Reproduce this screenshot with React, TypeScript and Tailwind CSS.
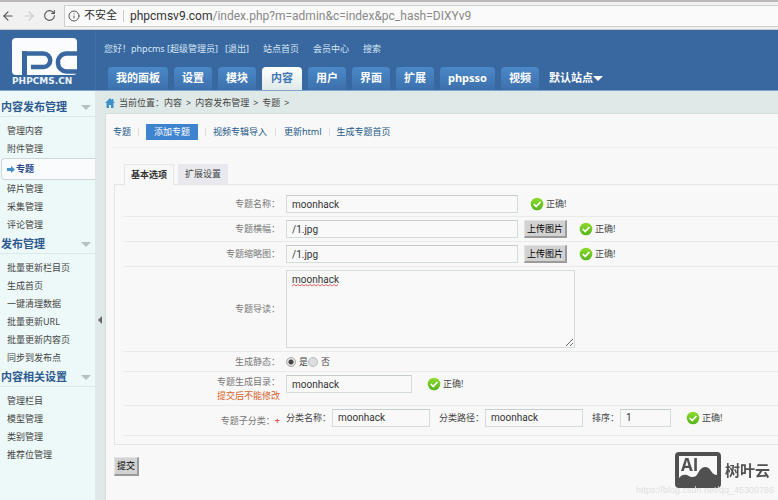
import React from 'react';
import { ArrowLeft, ArrowRight, Info, RotateCw } from 'lucide-react';

interface MenuItem {
  label: string;
  active?: boolean;
}

interface MenuGroup {
  title: string;
  items: MenuItem[];
}

const topTabs: MenuItem[] = [
  { label: '我的面板' },
  { label: '设置' },
  { label: '模块' },
  { label: '内容', active: true },
  { label: '用户' },
  { label: '界面' },
  { label: '扩展' },
  { label: 'phpsso' },
  { label: '视频' }
];

const menuGroups: MenuGroup[] = [
  {
    title: '内容发布管理',
    items: [
      { label: '管理内容' },
      { label: '附件管理' },
      { label: '专题', active: true },
      { label: '碎片管理' },
      { label: '采集管理' },
      { label: '评论管理' }
    ]
  },
  {
    title: '发布管理',
    items: [
      { label: '批量更新栏目页' },
      { label: '生成首页' },
      { label: '一键清理数据' },
      { label: '批量更新URL' },
      { label: '批量更新内容页' },
      { label: '同步到发布点' }
    ]
  },
  {
    title: '内容相关设置',
    items: [
      { label: '管理栏目' },
      { label: '模型管理' },
      { label: '类别管理' },
      { label: '推荐位管理' }
    ]
  }
];

const inputClass =
  'h-[18px] border border-[#d3dbdd] border-t-[#c6cdd0] bg-[#f9f9f9] px-[5px] font-["Roboto",sans-serif] text-[10px] text-[#333] outline-none';

const Logo: React.FC = () => (
  <a href="#" className="flex w-[95px] shrink-0 flex-col gap-[2px] pl-3 pt-2 leading-none">
    <svg width="65" height="37" viewBox="0 0 65 37" aria-hidden="true">
      <rect width="65" height="37" rx="4" fill="#fafcfd" />
      <path d="M12.500 37V20" fill="none" stroke="#38689f" strokeWidth="5" />
      <path d="M10 15.500H31.500a6.500 6.500 0 0 1 0 13.500H19" fill="none" stroke="#38689f" strokeWidth="4.500" />
      <path d="M12.500 13.300V24" fill="none" stroke="#38689f" strokeWidth="5" />
      <path d="M65 15.500H54.500a8.500 8.500 0 0 0-8.500 8.500v1.500a8.500 8.500 0 0 0 8.500 8H65" fill="none" stroke="#38689f" strokeWidth="4.500" />
    </svg>
    <span className="font-['DejaVu_Sans',sans-serif] text-[9px] font-bold text-[#e8f1fa]">PHPCMS.CN</span>
  </a>
);

const Caret: React.FC<{ className: string }> = ({ className }) => (
  <svg className={className} width="10" height="5" viewBox="0 0 10 5" fill="currentColor" aria-hidden="true">
    <path d="M0 0h10L5 5z" />
  </svg>
);

const Correct: React.FC = () => (
  <span className="flex items-center gap-[2px] text-[#444]">
    <svg width="14" height="14" viewBox="0 0 14 14" aria-hidden="true">
      <defs>
        <linearGradient id="ok" x1="0" y1="0" x2="0" y2="1">
          <stop offset="0" stopColor="#8fdc2c" />
          <stop offset="1" stopColor="#55b51c" />
        </linearGradient>
      </defs>
      <circle cx="7" cy="7" r="6.300" fill="url(#ok)" />
      <path d="M3.800 7l2.400 2.500 4.200-4.500" fill="none" stroke="#fff" strokeWidth="1.800" />
    </svg>
    正确!
  </span>
);

interface FieldRowProps {
  label: React.ReactNode;
  htmlFor?: string;
  className?: string;
  children: React.ReactNode;
}

const FieldRow: React.FC<FieldRowProps> = ({ label, htmlFor, className = '', children }) => (
  <div className={`ml-2 flex items-center gap-[6px] border-b border-[#eaeaec] ${className}`}>
    <label htmlFor={htmlFor} className="w-[157px] shrink-0 text-right text-[#777]">
      {label}
    </label>
    {children}
  </div>
);

const UploadButton: React.FC = () => (
  <button className="h-[18px] shrink-0 border border-b-2 border-r-2 border-[#e2e2e2] border-b-[#9b9b9b] border-r-[#9b9b9b] bg-[#d2d2d2] px-[2px] text-[9px] leading-3 text-black">
    上传图片
  </button>
);

const BrowserBar: React.FC = () => (
  <div className="border-t-2 border-[#bdb9ba]">
    <div className="flex h-7 items-center border-b border-[#c9cdd2] bg-[#f1f1f1] text-[#555]">
      <div className="flex w-16 shrink-0 items-center gap-[7px] pl-px">
        <ArrowLeft size={14} />
        <ArrowRight size={14} className="text-[#ccc]" />
        <RotateCw size={13} />
      </div>
      <div className="flex h-[22px] grow items-center border border-r-0 border-[#cfcfcf] bg-[#fafafa] pl-[3px] text-[11px]">
        <Info size={12} />
        <span className="pl-1 text-[#333]">不安全</span>
        <span className="mx-[6px] h-3 w-px bg-[#ccc]" />
        <span className="font-['Roboto',sans-serif] text-[12px] text-[#888]">
          <span className="text-[#333]">phpcmsv9.com</span>/index.php?m=admin&amp;c=index&amp;pc_hash=DIXYv9
        </span>
      </div>
    </div>
  </div>
);

const Header: React.FC = () => (
  <header className="flex h-[61px] border-b border-[#7fa3cb] bg-[#38689f]">
    <Logo />
    <div className="flex grow flex-col justify-between border-l border-[#426fa6] pl-2 text-white">
      <div className="flex gap-[14px] pt-3 text-[9px] leading-[14px] text-[#d5e6f6]">
        <span>
          您好！phpcms [超级管理员] &nbsp;&nbsp;<a href="#">[退出]</a>
        </span>
        <a href="#">站点首页</a>
        <a href="#">会员中心</a>
        <a href="#">搜索</a>
      </div>
      <nav className="flex gap-[6px] pl-1 text-[11px] font-bold">
        {topTabs.map((tab) => (
          <a
            key={tab.label}
            href="#"
            className={`flex h-[23px] items-center rounded-t-sm ${
              tab.active
                ? 'bg-linear-to-b from-white to-[#dfeae8] px-[9px] text-[#3f76b5]'
                : 'bg-linear-to-b from-[#4b88c8] to-[#3c70ac] px-2'
            }`}
          >
            {tab.label}
          </a>
        ))}
        <button className="flex h-[22px] items-center pl-1 font-bold">
          默认站点
          <Caret className="text-white" />
        </button>
      </nav>
    </div>
  </header>
);

const Sidebar: React.FC = () => (
  <aside className="w-[95px] shrink-0 bg-[#edf8f8] pt-[7px]">
    {menuGroups.map((group) => (
      <section key={group.title}>
        <h2 className="flex h-[19px] items-center justify-between border-b border-[#dbe8ea] pl-px pr-1 text-[11px] font-bold text-[#2d5a91]">
          {group.title}
          <Caret className="text-[#b7bfc0]" />
        </h2>
        <ul className="pb-px pt-[5px]">
          {group.items.map((item) =>
            item.active ? (
              <li key={item.label} className="ml-px flex h-[22px] items-center rounded-l border border-r-0 border-[#cdd7da] bg-[#f9fbfc]">
                <svg className="ml-[5px]" width="8" height="7" viewBox="0 0 8 7" fill="#4193c9" aria-hidden="true">
                  <path d="M0 2h4V0l4 3.500L4 7V5H0z" />
                </svg>
                <a href="#" className="pl-px font-bold text-[#23458c]">
                  {item.label}
                </a>
              </li>
            ) : (
              <li key={item.label} className="flex h-[18px] items-center pl-[7px]">
                <a href="#">{item.label}</a>
              </li>
            )
          )}
        </ul>
      </section>
    ))}
  </aside>
);

const TopicForm: React.FC = () => (
  <form className="pl-2 pt-4" onSubmit={(e) => e.preventDefault()}>
    <div className="flex gap-1 pl-[10px]">
      <button className="-mb-px h-[21px] border border-b-0 border-[#e6e6ea] bg-[#f8f8f8] px-[6px] font-bold text-[#333]">
        基本选项
      </button>
      <button className="h-5 bg-[#e8e8ee] px-[7px] text-[#444]">扩展设置</button>
    </div>

    <div className="border border-r-0 border-[#e2e4e6] pb-2 pt-[7px]">
      <FieldRow label="专题名称：" htmlFor="title" className="h-[25px]">
        <input id="title" defaultValue="moonhack" className={`${inputClass} w-[232px]`} />
        <div className="pl-[6px]">
          <Correct />
        </div>
      </FieldRow>
      <FieldRow label="专题横幅：" htmlFor="banner" className="h-[25px]">
        <input id="banner" defaultValue="/1.jpg" className={`${inputClass} w-[232px]`} />
        <UploadButton />
        <div className="pl-[6px]">
          <Correct />
        </div>
      </FieldRow>
      <FieldRow label="专题缩略图：" htmlFor="thumb" className="h-[25px]">
        <input id="thumb" defaultValue="/1.jpg" className={`${inputClass} w-[232px]`} />
        <UploadButton />
        <div className="pl-[6px]">
          <Correct />
        </div>
      </FieldRow>
      <FieldRow label="专题导读：" htmlFor="description" className="h-[85px]">
        <div className="relative h-[78px] w-[289px]">
          <textarea
            id="description"
            defaultValue="moonhack"
            className="block h-full w-full resize border border-[#d3dbdd] bg-[#f9f9f9] px-[5px] py-[2px] font-['Roboto',sans-serif] text-[10px] leading-[14px] text-[#333] outline-none"
          />
          {/* Spell check underline */}
          <svg className="pointer-events-none absolute left-[6px] top-[14px]" width="47" height="3" aria-hidden="true">
            <path
              d="M0 2l2-1.500 2 1.500 2-1.500 2 1.500 2-1.500 2 1.500 2-1.500 2 1.500 2-1.500 2 1.500 2-1.500 2 1.500 2-1.500 2 1.500 2-1.500 2 1.500 2-1.500 2 1.500 2-1.500 2 1.500 2-1.500 2 1.500 2-1.500"
              fill="none"
              stroke="#e06a6a"
            />
          </svg>
        </div>
      </FieldRow>
      <FieldRow label="生成静态：" className="h-5">
        <div className="flex items-center text-[#444]">
          <input
            id="static-yes"
            type="radio"
            name="static"
            defaultChecked
            className="size-[10px] appearance-none rounded-full border border-[#aaa] bg-[#e3e3e3] bg-[radial-gradient(#444_0_2px,transparent_3px)]"
          />
          <label htmlFor="static-yes" className="pl-[3px]">是</label>
          <input
            id="static-no"
            type="radio"
            name="static"
            className="size-[10px] appearance-none rounded-full border border-[#bbb] bg-[#dedede]"
          />
          <label htmlFor="static-no" className="pl-[3px]">否</label>
        </div>
      </FieldRow>
      <div className="ml-2 flex h-[34px] gap-[6px] border-b border-[#eaeaec] pt-[3px]">
        <label htmlFor="directory" className="w-[157px] shrink-0 text-right leading-[14px] text-[#777]">
          专题生成目录：
          <br />
          <span className="text-[#d9622b]">提交后不能修改</span>
        </label>
        <input id="directory" defaultValue="moonhack" className={`${inputClass} w-[126px]`} />
        <div className="pl-[9px] pt-[2px]">
          <Correct />
        </div>
      </div>
      <FieldRow
        label={
          <>
            专题子分类：<span className="font-bold text-[#e0524a]">+</span>
          </>
        }
        htmlFor="type-name"
        className="h-[30px]"
      >
        <div className="flex h-full items-start gap-[9px] pt-[3px] leading-[18px] text-[#444]">
          <div className="flex gap-px">
            <label htmlFor="type-name">分类名称：</label>
            <input id="type-name" defaultValue="moonhack" className={`${inputClass} w-[98px]`} />
          </div>
          <div className="flex gap-px">
            <label htmlFor="type-path">分类路径：</label>
            <input id="type-path" defaultValue="moonhack" className={`${inputClass} w-[98px]`} />
          </div>
          <div className="flex gap-px">
            <label htmlFor="type-order">排序：</label>
            <input id="type-order" defaultValue="1" className={`${inputClass} w-[51px]`} />
          </div>
          <div className="pl-[6px]">
            <Correct />
          </div>
        </div>
      </FieldRow>
    </div>

    <button className="mt-3 h-[19px] border border-b-2 border-r-2 border-[#e2e2e2] border-b-[#9b9b9b] border-r-[#9b9b9b] bg-[#d2d2d2] px-[2px] text-black">
      提交
    </button>
  </form>
);

const Watermark: React.FC = () => (
  <div className="pointer-events-none fixed bottom-1 right-1 flex flex-col items-end">
    <div className="flex items-center gap-1 pr-1 text-[15px] font-bold text-[#505050]">
      <svg width="46" height="36" viewBox="0 0 46 36" aria-hidden="true">
        <rect x="2" y="2" width="42" height="32" rx="2" fill="#f8f8f8" stroke="#505050" strokeWidth="4" />
        <path d="M4 26c2-3 5-4 8-3 3 2 6 3 9 1 2-2 3-6 6-8 3-2 7-1 9 3 2 3 4 4 6 4v11H4z" fill="#505050" />
        <text x="6" y="19" fontSize="17" fontWeight="700" fontFamily="Open Sans, sans-serif" fill="#505050">
          AI
        </text>
      </svg>
      树叶云
    </div>
    <span className="-mt-1 font-['Liberation_Sans',sans-serif] text-[9px] leading-3 text-[#dedede]">
      https://blog.csdn.net/qq_45300786
    </span>
  </div>
);

export default function App() {
  return (
    <div className="flex min-h-screen flex-col overflow-hidden bg-[#dfe9e7] font-['Noto_Sans','Noto_Sans_CJK_SC',sans-serif] text-[9px] text-[#444]">
      <BrowserBar />
      <Header />
      <div className="flex grow">
        <Sidebar />
        <div className="flex w-[10px] shrink-0 items-center justify-center pt-12">
          <button aria-label="收起菜单">
            <svg width="4" height="8" viewBox="0 0 4 8" fill="#666" aria-hidden="true">
              <path d="M4 0v8L0 4z" />
            </svg>
          </button>
        </div>
        <main className="flex min-w-0 grow flex-col">
          <div className="flex h-[22px] items-center gap-1 pt-px text-[#444]">
            <svg width="10" height="10" viewBox="0 0 10 10" fill="#4091c8" aria-hidden="true">
              <path d="M5 0L0 5h1.500v5h2.500V7h2v3h2.500V5H10L8.500 3.500V1H7v1z" />
            </svg>
            <span>当前位置：内容</span>
            <span>&gt;</span>
            <span>内容发布管理</span>
            <span>&gt;</span>
            <span>专题</span>
            <span>&gt;</span>
          </div>
          <div className="grow border-l border-t border-[#d3dddc] bg-[#f8f8f8]">
            <nav className="ml-[7px] flex h-[34px] items-center border-b border-[#ececee] pt-[2px] text-[#215787]">
              <a href="#">专题</a>
              <span className="mx-[7px] h-2 w-px bg-[#e3dcd5]" />
              <a href="#" className="bg-[#3d83cd] px-2 leading-4 text-white">添加专题</a>
              <span className="mx-[7px] h-2 w-px bg-[#ddd]" />
              <a href="#">视频专辑导入</a>
              <span className="mx-2 h-2 w-px bg-[#ddd]" />
              <a href="#">更新html</a>
              <span className="mx-[7px] h-2 w-px bg-[#ddd]" />
              <a href="#">生成专题首页</a>
            </nav>
            <TopicForm />
          </div>
        </main>
      </div>
      <Watermark />
    </div>
  );
}
